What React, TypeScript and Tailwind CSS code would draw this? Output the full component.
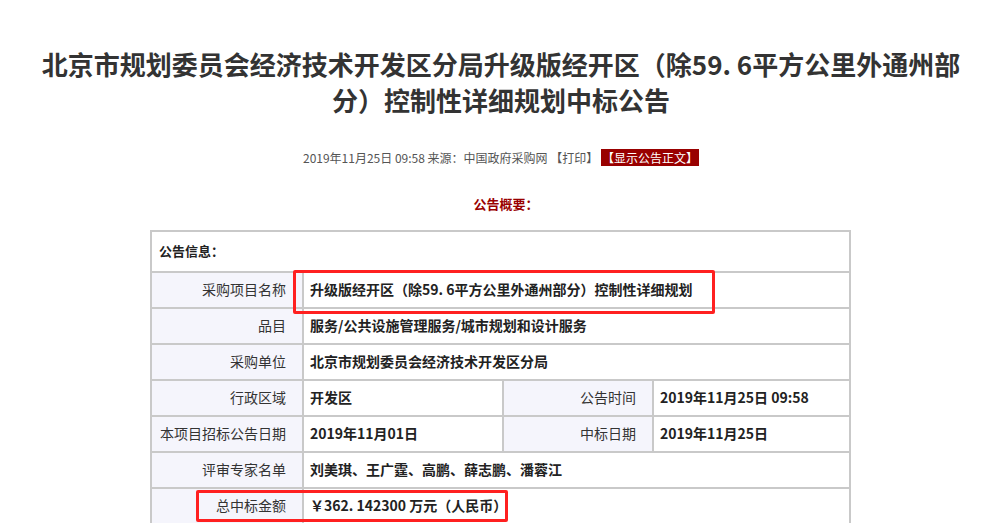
export default function App() {
  const f = { fontFamily: '"Noto Sans CJK SC", "Liberation Sans", sans-serif' };
  const lbl = "bg-[#f5f5fc] border-2 border-[#c9c9c9] text-right pr-[16px] text-[14px] text-[#333]";
  const val = "border-2 border-[#c9c9c9] pl-[6px] text-[14px] font-bold text-[#222]";
  return (
    <div className="w-[1002px] h-[523px] bg-white overflow-hidden relative" style={f}>
      <div className="pt-[46px] text-center text-[26px] font-bold text-[#333] leading-[36px] px-[10px]">
        北京市规划委员会经济技术开发区分局升级版经开区（除59. 6平方公里外通州部<br />分）控制性详细规划中标公告
      </div>
      <div className="mt-[32px] text-center text-[12px] text-[#555] leading-[16px]">
        2019年11月25日 09:58 来源：中国政府采购网 【打印】 <span className="bg-[#990000] text-white px-[1px]">【显示公告正文】</span>
      </div>
      <div className="mt-[28px] text-center text-[13px] font-bold text-[#990000] pl-[10px]">公告概要：</div>
      <table className="mt-[16px] ml-[150px] w-[701px] border-collapse border-2 border-[#c9c9c9]">
        <tbody>
          <tr className="h-[41px]"><td colSpan={4} className="border-2 border-[#c9c9c9] pl-[7px] text-[13px] font-bold text-[#222]">公告信息：</td></tr>
          <tr className="h-[36px]"><td className={lbl + " w-[152px]"}>采购项目名称</td><td colSpan={3} className={val}>升级版经开区（除59. 6平方公里外通州部分）控制性详细规划</td></tr>
          <tr className="h-[36px]"><td className={lbl}>品目</td><td colSpan={3} className={val}>服务/公共设施管理服务/城市规划和设计服务</td></tr>
          <tr className="h-[36px]"><td className={lbl}>采购单位</td><td colSpan={3} className={val}>北京市规划委员会经济技术开发区分局</td></tr>
          <tr className="h-[36px]"><td className={lbl}>行政区域</td><td className={val + " w-[200px]"}>开发区</td><td className={lbl + " w-[150px]"}>公告时间</td><td className={val}>2019年11月25日 09:58</td></tr>
          <tr className="h-[36px]"><td className={lbl}>本项目招标公告日期</td><td className={val}>2019年11月01日</td><td className={lbl}>中标日期</td><td className={val}>2019年11月25日</td></tr>
          <tr className="h-[36px]"><td className={lbl}>评审专家名单</td><td colSpan={3} className={val}>刘美琪、王广霆、高鹏、薛志鹏、潘蓉江</td></tr>
          <tr className="h-[36px]"><td className={lbl}>总中标金额</td><td colSpan={3} className={val}>￥362. 142300 万元（人民币）</td></tr>
        </tbody>
      </table>
      <div className="absolute left-[293px] top-[270px] w-[422px] h-[44px] border-[3px] border-[#ff2020] rounded-[2px]" />
      <div className="absolute left-[196px] top-[490px] w-[312px] h-[32px] border-[3px] border-[#ff2020] rounded-[2px]" />
    </div>
  );
}
